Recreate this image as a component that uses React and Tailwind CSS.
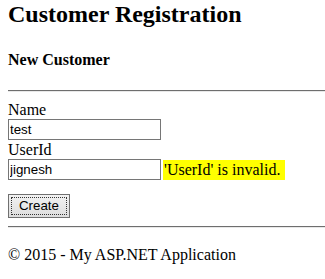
export default function App() {
  return (
    <div className="min-h-[279px] overflow-hidden bg-white px-2 text-black" style={{ fontFamily: '"Liberation Serif", "Times New Roman", serif' }}>
      {/* Header */}
      <h1 className="text-[24px] font-bold leading-[28px]">Customer Registration</h1>
      <h4 className="mt-[23px] text-[16px] font-bold leading-[18px]">New Customer</h4>
      <hr className="-mr-2 mt-[21px] border-0 border-t border-t-[#6e6e6e] border-b border-b-[#e8e8e8]" />

      {/* Form */}
      <form onSubmit={(e) => e.preventDefault()} className="mt-[8px]">
        <div className="text-[16px] leading-[19px]">Name</div>
        <input
          type="text"
          defaultValue="test"
          className="block h-[21px] w-[153px] border border-[#767676] px-[1px] text-[13.33px] text-black outline-none"
          style={{ fontFamily: '"Liberation Sans", Arial, sans-serif' }}
        />
        <div className="text-[16px] leading-[19px]">UserId</div>
        <div className="flex items-center">
          <input
            type="text"
            defaultValue="jignesh"
            className="block h-[21px] w-[153px] border border-[#767676] px-[1px] text-[13.33px] text-black outline-none"
            style={{ fontFamily: '"Liberation Sans", Arial, sans-serif' }}
          />
          <span className="ml-[2px] bg-[#ffff00] pb-[1px] pl-[1px] pr-[5px] pt-[1px] text-[16px] leading-[18px]">'UserId' is invalid.</span>
        </div>

        <button
          type="submit"
          className="mt-[14px] flex h-[24px] w-[62px] items-center justify-center border border-[#707070] bg-gradient-to-b from-[#f2f2f2] to-[#dddddd] p-[2px] text-[13.33px] text-black"
          style={{ fontFamily: '"Liberation Sans", Arial, sans-serif' }}
        >
          <span className="flex h-full w-full items-center justify-center border border-dotted border-[#333]">Create</span>
        </button>
      </form>

      <hr className="-mr-2 mt-[8px] border-0 border-t border-t-[#6e6e6e] border-b border-b-[#e8e8e8]" />

      {/* Footer */}
      <footer className="mt-[17px] text-[16px] leading-[19px]">© 2015 - My ASP.NET Application</footer>
    </div>
  )
}
